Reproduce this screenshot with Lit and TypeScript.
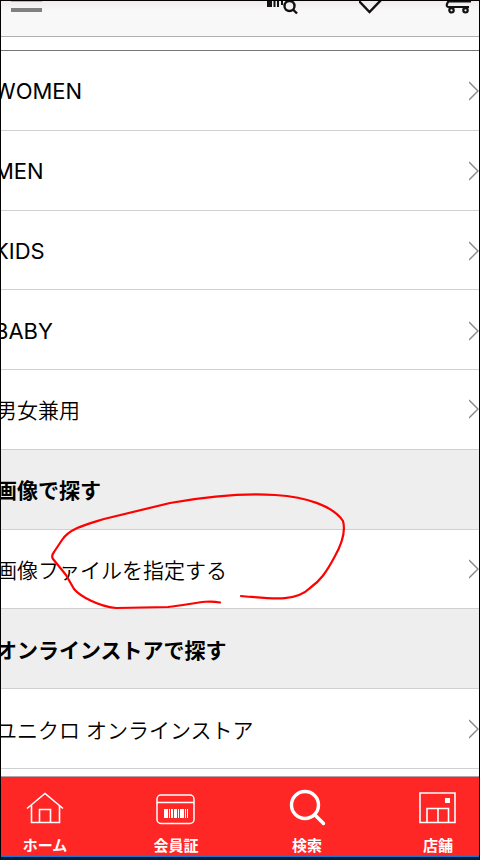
import { LitElement, html, css, svg } from "lit";
import { customElement } from "lit/decorators.js";
import { classMap } from "lit/directives/class-map.js";

type Row = { text: string; latin?: boolean; heading?: boolean };

const rows: Row[] = [
  { text: "WOMEN", latin: true },
  { text: "MEN", latin: true },
  { text: "KIDS", latin: true },
  { text: "BABY", latin: true },
  { text: "男女兼用" },
  { text: "画像で探す", heading: true },
  { text: "画像ファイルを指定する" },
  { text: "オンラインストアで探す", heading: true },
  { text: "ユニクロ オンラインストア" },
];

const tabs = [
  {
    label: "ホーム",
    icon: svg`<g stroke-width="1.6"><path d="M2 17.500 20 2.500l18 15M6.500 14v17.500h28V14"/><path d="M14.500 31V18.500h11V31"/></g>`,
  },
  {
    label: "会員証",
    icon: svg`<g stroke-width="1.500"><rect x="1" y="4" width="37" height="28.500" rx="4"/><path d="M1 11.500h37"/></g>
      <path stroke="none" fill="#fff" d="M8 18h4v9H8zM13 18h1v9h-1zM15 18h2v9h-2zM18 18h3v9h-3zM22 18h1v9h-1zM24 18h4v9h-4zM29 18h1v9h-1zM31 18h1v9h-1z"/>`,
  },
  {
    label: "検索",
    icon: svg`<g stroke-width="3.400" stroke-linecap="round"><circle cx="18" cy="14" r="13.500"/><path d="m28 24 8.500 8.500"/></g>`,
  },
  {
    label: "店舗",
    icon: svg`<g stroke-width="1.600"><path d="M2 2h35v29.500H2zM9 31V17.500h21.500V31M20 18v13"/></g>
      <path stroke="none" fill="#fff" d="M27 7h5v5h-5z"/>`,
  },
];

@customElement("app-root")
export class AppRoot extends LitElement {
  static styles = css`
    :host {
      display: flex;
      flex-direction: column;
      box-sizing: border-box;
      min-height: 100vh;
      border: 1px solid #000;
      border-bottom: 3px solid #051a33;
      overflow: hidden;
      background: #fff;
      color: #000;
      font-family: Inter, "Noto Sans CJK JP", sans-serif;
    }
    button {
      border: 0;
      padding: 0;
      background: none;
      color: inherit;
      font: inherit;
    }
    svg {
      display: block;
      fill: none;
      stroke: currentColor;
    }
    .top {
      display: flex;
      justify-content: space-between;
      height: 35px;
      border-bottom: 1px solid #b0b0b0;
      background: linear-gradient(#efeaee, #f8f8f8 10px);
      color: #111;
    }
    .menu {
      margin-left: 10px;
      height: 14px;
      color: #808080;
    }
    .tools {
      display: flex;
      gap: 58px;
      height: 14px;
    }
    .list {
      flex: 1;
      display: grid;
      grid-auto-rows: minmax(60px, 1fr);
      list-style: none;
      margin: 13px 0 7px;
      padding: 0;
      border-top: 1px solid #777;
    }
    .row {
      display: flex;
      border-bottom: 1px solid #d0d0d0;
      font-size: 21px;
      font-weight: 350;
    }
    .link,
    .title {
      flex: 1;
      display: flex;
      align-items: center;
      justify-content: space-between;
      margin: 0 0 0 -5px;
      color: inherit;
      text-decoration: none;
      font-size: inherit;
      white-space: nowrap;
    }
    .latin {
      font-size: 22px;
      font-weight: 400;
    }
    .latin .link {
      margin-left: -7px;
      padding-top: 2px;
    }
    .heading {
      background: #eee;
    }
    .title {
      font-weight: 700;
    }
    .chevron {
      color: #888;
    }
    .tabs {
      display: flex;
      justify-content: space-between;
      padding: 14px 17px 0 20px;
      height: 65px;
      border-top: 1px solid #b5a5a8;
      border-bottom: 1px solid #1675d1;
      background: #ff2626;
      color: #fff;
    }
    .tab {
      display: flex;
      flex-direction: column;
      align-items: center;
      gap: 9px;
      width: 48px;
      height: 65px;
      font-size: 15px;
      font-weight: 700;
      line-height: 20px;
      white-space: nowrap;
    }
    .tab svg {
      overflow: visible;
    }
    .mark {
      position: absolute;
      left: 50px;
      top: 490px;
      color: #f00;
      pointer-events: none;
    }
  `;

  render() {
    return html`
      <header class="top">
        <button class="menu" aria-label="メニュー">
          <svg width="32" height="14" stroke-width="4">
            <path d="M0-1.500h31M0 9h31" />
          </svg>
        </button>
        <div class="tools">
          <button aria-label="バーコード検索">
            <svg width="34" height="14">
              <path d="M2.500-2v8" stroke-width="5" />
              <path d="M7.500-2v8M11-2v8M15-2v6" stroke-width="2" />
              <g stroke-width="2.400"><circle cx="22.500" cy="5" r="5" /><path d="m26 8.500 4 4" /></g>
            </svg>
          </button>
          <button aria-label="お気に入り">
            <svg width="28" height="14" stroke-width="2.400"><path d="M-3-3 10.500 11 24-3" /></svg>
          </button>
          <button aria-label="カート">
            <svg width="34" height="14" stroke-width="2.200">
              <path d="M4-1 2 3q-1 3 2 3h20M4 .5h22" />
              <circle cx="6.500" cy="9.300" r="2.200" /><circle cx="20.500" cy="9.300" r="2.200" />
            </svg>
          </button>
        </div>
      </header>
      <ul class="list">
        ${rows.map(
          (r) => html`<li class=${classMap({ row: true, latin: !!r.latin, heading: !!r.heading })}>
            ${r.heading
              ? html`<h2 class="title">${r.text}</h2>`
              : html`<a class="link" href="#">
                  <span>${r.text}</span>
                  <svg class="chevron" width="10" height="20" stroke-width="1.400"><path d="m0 1 9 9-9 9" /></svg>
                </a>`}
          </li>`
        )}
      </ul>
      <nav class="tabs">
        ${tabs.map(
          (t) => html`<button class="tab">
            <svg width="40" height="36">${t.icon}</svg>
            <span>${t.label}</span>
          </button>`
        )}
      </nav>
      <svg class="mark" width="300" height="124" stroke-width="2.200" stroke-linecap="round" stroke-linejoin="round">
        <path
          d="M170 112.500C155 109.500 142 114.500 118 117L66 118C48 116.500 30 106 24 99L16 85 3 69Q1 66 4 62L12 50C20 38 38 34 54 29L120 13C165 5 195 3 225 5C257 7 283 16 293 31C296 42 290 57 285 66C276 83 270 91 260 98C245 113 218 108 191 106"
        />
      </svg>
    `;
  }
}
